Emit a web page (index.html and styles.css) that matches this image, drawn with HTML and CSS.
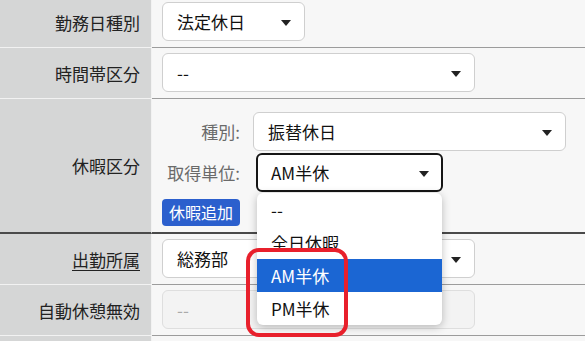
FILE: index.html
```html
<!DOCTYPE html>
<html lang="ja">
<head>
    <meta charset="UTF-8">
    <title>勤務設定</title>
    <link rel="stylesheet" href="styles.css">
</head>
<body>

<div class="form">
    <div class="row first">
        <div class="lbl">勤務日種別</div>
        <div class="val">
            <div class="select w-short">法定休日</div>
        </div>
    </div>

    <div class="row">
        <div class="lbl">時間帯区分</div>
        <div class="val">
            <div class="select w-long">--</div>
        </div>
    </div>

    <div class="row sect">
        <div class="lbl">休暇区分</div>
        <div class="val">
            <div class="sub">
                <span class="sub-lbl">種別:</span>
                <div class="select w-kind">振替休日</div>
                <span class="sub-lbl">取得単位:</span>
                <div class="unit-wrap">
                    <div class="select focus w-unit">AM半休</div>
                    <ul class="menu">
                        <li>--</li>
                        <li>全日休暇</li>
                        <li class="on">AM半休</li>
                        <li>PM半休</li>
                    </ul>
                    <div class="ring"></div>
                </div>
            </div>
            <button class="btn">休暇追加</button>
        </div>
    </div>

    <div class="row">
        <div class="lbl"><u>出勤所属</u></div>
        <div class="val">
            <div class="select w-long">総務部</div>
        </div>
    </div>

    <div class="row">
        <div class="lbl">自動休憩無効</div>
        <div class="val">
            <div class="select disabled w-long">--</div>
        </div>
    </div>

    <div class="row last">
        <div class="lbl"></div>
        <div class="val"></div>
    </div>
</div>

</body>
</html>
```

FILE: styles.css
```css
body {
    margin: 0;
    font-family: "Noto Sans CJK JP", "Noto Sans", sans-serif;
    font-size: 17px;
    color: #222;
    background: #f7f7f7;
    overflow: hidden;
}
.form {
    margin-top: -3px;
}
.row {
    display: grid;
    grid-template-columns: 152px 1fr;
}
.lbl {
    display: flex;
    align-items: center;
    justify-content: flex-end;
    padding-right: 11px;
    background: #d5d6d6;
    border-right: 1px solid #f2f2f2;
    border-bottom: 1px solid #f2f2f2;
}
.val {
    padding: 5px 10px 6px;
    border-bottom: 1px solid #9c9c9c;
}
.row.sect .lbl,
.row.sect .val {
    border-bottom: 2px solid #4a4a4a;
}
.row.sect .val {
    padding-top: 13px;
    padding-bottom: 6px;
}
.row.last .val,
.row.last .lbl {
    height: 40px;
}
.lbl u {
    text-underline-offset: 3px;
}

.select {
    position: relative;
    box-sizing: border-box;
    height: 39px;
    line-height: 37px;
    padding-left: 14px;
    background: #fff;
    border: 1px solid #cfcfcf;
    border-radius: 6px;
    color: #111;
}
.select::after {
    content: "";
    position: absolute;
    right: 13px;
    top: 17px;
    border-left: 5px solid transparent;
    border-right: 5px solid transparent;
    border-top: 6px solid #222;
}
.select.focus {
    border: 2px solid #161616;
    line-height: 35px;
    padding-left: 13px;
}
.select.focus::after {
    right: 12px;
    top: 16px;
}
.select.disabled {
    background: #f3f3f3;
    border-color: #dedede;
    color: #aaa;
}
.select.disabled::after {
    display: none;
}
.w-short { width: 143px; }
.w-long { width: 313px; }
.w-kind { width: 313px; }
.w-unit { width: 187px; margin-left: 3px; }

.sub {
    display: grid;
    grid-template-columns: 78px auto;
    column-gap: 13px;
    row-gap: 2px;
    align-items: center;
}
.sub-lbl {
    text-align: right;
    color: #6a6a6a;
}
.unit-wrap {
    position: relative;
}
.btn {
    display: block;
    margin-top: 7px;
    height: 27px;
    padding: 0 7px;
    border: none;
    border-radius: 4px;
    background: #2b5fcd;
    color: #fff;
    font-family: inherit;
    font-size: 16px;
    line-height: 27px;
}

.menu {
    position: absolute;
    left: 4px;
    top: 40px;
    width: 185px;
    margin: 0;
    padding: 0;
    list-style: none;
    background: #fff;
    border-radius: 6px;
    box-shadow: 0 2px 8px rgba(0,0,0,0.25);
    overflow: hidden;
    z-index: 2;
}
.menu li {
    height: 33px;
    line-height: 33px;
    padding-left: 14px;
    color: #111;
}
.menu li.on {
    background: #1b66d3;
    color: #fff;
}
.ring {
    position: absolute;
    left: -7px;
    top: 95px;
    width: 102px;
    height: 89px;
    box-sizing: border-box;
    border: 4px solid #e8202c;
    border-radius: 13px;
    z-index: 3;
}
```
